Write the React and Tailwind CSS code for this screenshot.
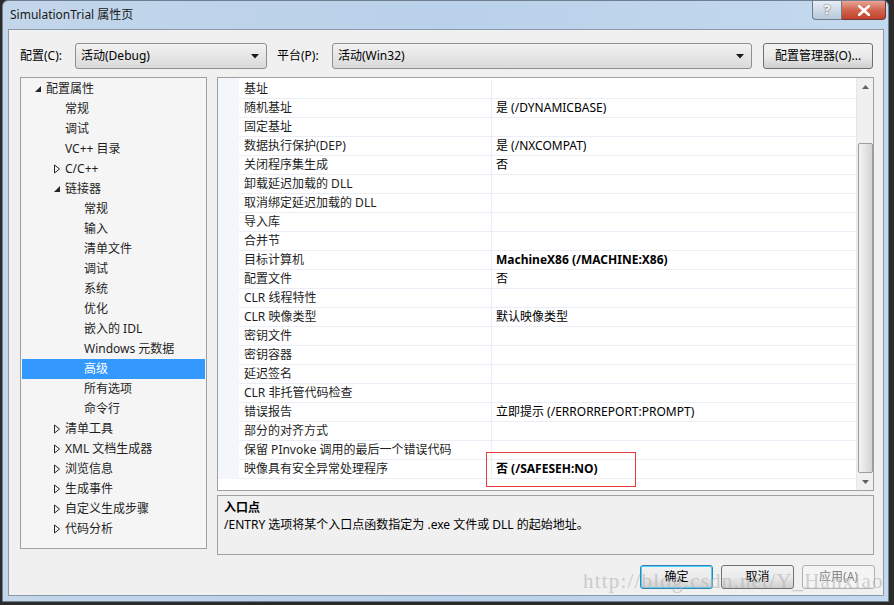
import { useState } from "react";

const FONT = { fontFamily: '"Noto Sans", "Noto Sans CJK SC", sans-serif' };

const tree = [
  { label: "配置属性", level: 0, arrow: "open" },
  { label: "常规", level: 1 },
  { label: "调试", level: 1 },
  { label: "VC++ 目录", level: 1 },
  { label: "C/C++", level: 1, arrow: "closed" },
  { label: "链接器", level: 1, arrow: "open" },
  { label: "常规", level: 2 },
  { label: "输入", level: 2 },
  { label: "清单文件", level: 2 },
  { label: "调试", level: 2 },
  { label: "系统", level: 2 },
  { label: "优化", level: 2 },
  { label: "嵌入的 IDL", level: 2 },
  { label: "Windows 元数据", level: 2 },
  { label: "高级", level: 2, selected: true },
  { label: "所有选项", level: 2 },
  { label: "命令行", level: 2 },
  { label: "清单工具", level: 1, arrow: "closed" },
  { label: "XML 文档生成器", level: 1, arrow: "closed" },
  { label: "浏览信息", level: 1, arrow: "closed" },
  { label: "生成事件", level: 1, arrow: "closed" },
  { label: "自定义生成步骤", level: 1, arrow: "closed" },
  { label: "代码分析", level: 1, arrow: "closed" },
];

const props = [
  ["基址", ""],
  ["随机基址", "是 (/DYNAMICBASE)"],
  ["固定基址", ""],
  ["数据执行保护(DEP)", "是 (/NXCOMPAT)"],
  ["关闭程序集生成", "否"],
  ["卸载延迟加载的 DLL", ""],
  ["取消绑定延迟加载的 DLL", ""],
  ["导入库", ""],
  ["合并节", ""],
  ["目标计算机", "MachineX86 (/MACHINE:X86)", true],
  ["配置文件", "否"],
  ["CLR 线程特性", ""],
  ["CLR 映像类型", "默认映像类型"],
  ["密钥文件", ""],
  ["密钥容器", ""],
  ["延迟签名", ""],
  ["CLR 非托管代码检查", ""],
  ["错误报告", "立即提示 (/ERRORREPORT:PROMPT)"],
  ["部分的对齐方式", ""],
  ["保留 PInvoke 调用的最后一个错误代码", ""],
  ["映像具有安全异常处理程序", "否 (/SAFESEH:NO)", true],
];

const indent = { 0: "pl-[12px]", 1: "pl-[31px]", 2: "pl-[50px]" };

function Arrow({ type }) {
  if (type === "open")
    return (
      <svg width="8" height="8" viewBox="0 0 8 8" className="mr-[4px]">
        <path d="M7 1 L7 7 L1 7 Z" fill="#262626" />
      </svg>
    );
  return (
    <svg width="8" height="10" viewBox="0 0 8 10" className="mr-[4px]">
      <path d="M1.5 1 L6.5 5 L1.5 9 Z" fill="none" stroke="#262626" strokeWidth="1" />
    </svg>
  );
}

function Combo({ value, className }) {
  return (
    <div
      className={`h-[26px] flex items-center justify-between rounded-[3px] border border-[#8e8f8f] bg-gradient-to-b from-[#f2f2f2] to-[#dadada] pl-[5px] pr-[7px] ${className}`}
    >
      <span>{value}</span>
      <svg width="8" height="5" viewBox="0 0 8 5">
        <path d="M0 0 L8 0 L4 4.5 Z" fill="#1a1a1a" />
      </svg>
    </div>
  );
}

function WinButton({ children, focus, disabled, className = "" }) {
  return (
    <div
      className={`h-[24px] flex items-center justify-center rounded-[3px] border ${
        focus
          ? "border-[#3c7fb1] shadow-[inset_0_0_0_1px_#48d3fd]"
          : disabled
          ? "border-[#adb2b5]"
          : "border-[#707070]"
      } ${
        disabled
          ? "bg-[#f4f4f4] text-[#838383]"
          : "bg-gradient-to-b from-[#f2f2f2] via-[#ebebeb] to-[#cfcfcf] text-black"
      } ${className}`}
    >
      {children}
    </div>
  );
}

export default function App() {
  const [selected] = useState(14);

  return (
    <div
      className="relative w-[894px] h-[605px] overflow-hidden bg-[#2b2b2b] text-[12px] text-black"
      style={FONT}
    >
      <div className="ml-[2px] mr-[5px] h-[602px] rounded-t-[6px] bg-gradient-to-r from-[#c3d6ea] via-[#b9d1ea] to-[#c4d9ee] flex flex-col border border-[#6f7f90]">
        {/* title bar */}
        <div className="h-[28px] flex items-start justify-between shrink-0">
          <div className="pl-[7px] pt-[5px] text-[12px] text-[#1a1a1a]">SimulationTrial 属性页</div>
          <div className="flex mr-[2px]">
            <div className="w-[30px] h-[19px] rounded-bl-[4px] border border-[#6d7a89] border-t-0 bg-gradient-to-b from-[#e6edf5] to-[#b9c8d9] flex items-center justify-center text-[13px] font-bold text-white [text-shadow:0_0_2px_#333]">
              ?
            </div>
            <div className="w-[44px] h-[19px] rounded-br-[4px] border border-[#6d3a3a] border-t-0 border-l-0 bg-gradient-to-b from-[#e8a496] via-[#d0644f] to-[#c2402a] flex items-center justify-center">
              <svg width="12" height="11" viewBox="0 0 12 11">
                <path d="M1 1 L11 10 M11 1 L1 10" stroke="#ffffff" strokeWidth="2.6" strokeLinecap="round" />
              </svg>
            </div>
          </div>
        </div>

        {/* client area */}
        <div className="ml-[5px] mr-[4px] h-[567px] bg-[#f0f0f0] border border-[#8a9aab] flex flex-col pl-[11px] pr-[8px]">
          {/* config row */}
          <div className="flex items-center h-[26px] mt-[13px]">
            <span className="w-[55px]">配置(C):</span>
            <Combo value="活动(Debug)" className="w-[192px]" />
            <span className="ml-[10px] w-[55px]">平台(P):</span>
            <Combo value="活动(Win32)" className="w-[420px]" />
            <WinButton className="ml-[11px] w-[110px] h-[26px]">配置管理器(O)...</WinButton>
          </div>

          {/* main row */}
          <div className="flex mt-[8px] gap-[10px]">
            {/* tree */}
            <div className="w-[187px] h-[472px] border border-[#a0a0a0] bg-[#f5f5f5] pt-[1px] px-[1px]">
              {tree.map((t, i) => (
                <div
                  key={i}
                  className={`h-[20px] flex items-center ${indent[t.level]} ${
                    i === selected ? "bg-[#3399ff] text-white" : "text-[#1e1e1e]"
                  }`}
                >
                  <span className="w-[12px] flex items-center">{t.arrow && <Arrow type={t.arrow} />}</span>
                  <span>{t.label}</span>
                </div>
              ))}
            </div>

            {/* right column */}
            <div className="w-[657px] flex flex-col gap-[4px]">
              <div className="h-[414px] border border-[#a0a0a0] bg-white flex">
                <div className="w-[21px] bg-[#f3f6fb] h-[401px]" />
                <div className="flex-1 h-[412px] pt-[2px]">
                  {props.map(([name, value, bold], i) => (
                    <div key={i} className="h-[19px] flex border-b border-[#eaeef6]">
                      <div className="w-[253px] pl-[5px] border-r border-[#eaeef6] flex items-center text-[#1e1e1e] whitespace-nowrap">
                        {name}
                      </div>
                      <div className={`flex-1 pl-[4px] flex items-center ${bold ? "font-bold" : ""}`}>
                        {i === props.length - 1 ? (
                          <div className="relative">
                            <span>{value}</span>
                            <div className="absolute left-[-10px] top-[-8px] w-[150px] h-[35px] border border-[#e23c3c]" />
                          </div>
                        ) : (
                          value
                        )}
                      </div>
                    </div>
                  ))}
                </div>
                {/* scrollbar */}
                <div className="w-[17px] bg-[#f0f0f0] border-l border-[#e6e6e6] flex flex-col items-center">
                  <div className="h-[17px] flex items-center justify-center">
                    <svg width="7" height="4" viewBox="0 0 7 4">
                      <path d="M0 4 L7 4 L3.5 0 Z" fill="#606060" />
                    </svg>
                  </div>
                  <div className="mt-[48px] w-[15px] h-[330px] rounded-[2px] border border-[#9b9b9b] bg-gradient-to-r from-[#f3f3f3] via-[#e4e4e4] to-[#d4d4d4]" />
                  <div className="flex-1" />
                  <div className="h-[17px] flex items-center justify-center">
                    <svg width="7" height="4" viewBox="0 0 7 4">
                      <path d="M0 0 L7 0 L3.5 4 Z" fill="#606060" />
                    </svg>
                  </div>
                </div>
              </div>

              <div className="h-[60px] border border-[#a0a0a0] bg-[#f0f0f0] px-[6px] pt-[3px] leading-[17px]">
                <div className="font-bold">入口点</div>
                <div>/ENTRY 选项将某个入口点函数指定为 .exe 文件或 DLL 的起始地址。</div>
              </div>
            </div>
          </div>

          {/* buttons */}
          <div className="flex justify-end gap-[8px] mt-[10px]">
            <WinButton focus className="w-[73px]">确定</WinButton>
            <WinButton className="w-[73px]">取消</WinButton>
            <WinButton disabled className="w-[73px]">应用(A)</WinButton>
          </div>
        </div>
      </div>

      {/* watermark */}
      <div
        className="absolute left-[583px] top-[566px] text-[21px] text-[#b4b4b4] opacity-60 tracking-[1.2px] pointer-events-none"
        style={{ fontFamily: '"Liberation Serif", serif' }}
      >
        http://blog.csdn.net/Y_Hanxiao
      </div>
    </div>
  );
}
